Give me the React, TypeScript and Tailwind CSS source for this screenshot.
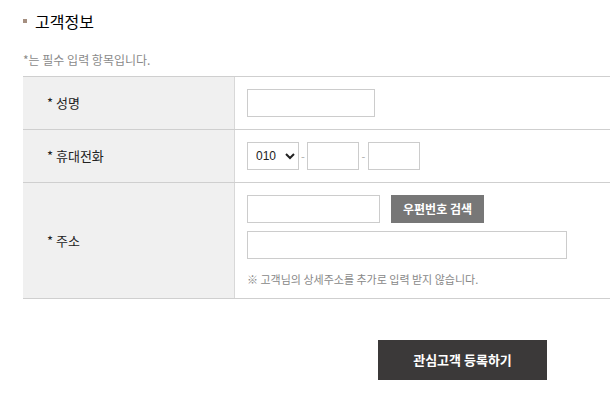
const font = { fontFamily: '"Malgun Gothic", "Noto Sans CJK KR", "Noto Sans", sans-serif' };

export default function App() {
  return (
    <div className="min-h-screen bg-white pl-[23px] pt-[11px] text-[#222]" style={font}>
      <h3 className="flex items-center gap-[8px] text-[16px] leading-[20px] font-normal text-black">
        <span className="block h-[4px] w-[4px] bg-[#a58f80]" />
        고객정보
      </h3>

      <p className="mt-[21px] text-[12px] leading-[16px] text-[#8a8a8a]">*는 필수 입력 항목입니다.</p>

      <div className="mt-[8px] border-t border-[#cfcfcf] text-[13px]">
        <div className="grid h-[53px] grid-cols-[212px_1fr] border-b border-[#cfcfcf]">
          <div className="flex items-center border-r border-[#d8d8d8] bg-[#f0f0f0] pl-[24px] text-[#222]">* 성명</div>
          <div className="flex items-center pl-[12px]">
            <input className="h-[28px] w-[128px] border border-[#cccccc] outline-none" />
          </div>
        </div>

        <div className="grid h-[53px] grid-cols-[212px_1fr] border-b border-[#cfcfcf]">
          <div className="flex items-center border-r border-[#d8d8d8] bg-[#f0f0f0] pl-[24px] text-[#222]">* 휴대전화</div>
          <div className="flex items-center pl-[12px] text-[#aaa]">
            <select className="h-[28px] w-[52px] border border-[#cccccc] bg-white pl-[4px] text-[12px] text-[#222] outline-none" style={{ fontFamily: '"Liberation Sans", sans-serif' }}>
              <option>010</option>
            </select>
            <span className="w-[8px] text-center text-[11px]">-</span>
            <input className="h-[28px] w-[52px] border border-[#cccccc] outline-none" />
            <span className="w-[9px] text-center text-[11px]">-</span>
            <input className="h-[28px] w-[52px] border border-[#cccccc] outline-none" />
          </div>
        </div>

        <div className="grid h-[116px] grid-cols-[212px_1fr] border-b border-[#cfcfcf]">
          <div className="flex items-center border-r border-[#d8d8d8] bg-[#f0f0f0] pl-[24px] text-[#222]">* 주소</div>
          <div className="flex flex-col pl-[12px] pt-[12px]">
            <div className="flex items-center gap-[11px]">
              <input className="h-[28px] w-[133px] border border-[#cccccc] outline-none" />
              <button className="h-[28px] w-[93px] bg-[#777777] text-[12px] font-bold text-white">우편번호 검색</button>
            </div>
            <input className="mt-[8px] h-[28px] w-[320px] border border-[#cccccc] outline-none" />
            <p className="mt-[12px] text-[11px] leading-[16px] text-[#888]">※ 고객님의 상세주소를 추가로 입력 받지 않습니다.</p>
          </div>
        </div>
      </div>

      <div className="mt-[41px] flex">
        <button className="ml-[355px] h-[40px] w-[169px] bg-[#3b3939] text-[13px] font-bold text-white">관심고객 등록하기</button>
      </div>
    </div>
  );
}
